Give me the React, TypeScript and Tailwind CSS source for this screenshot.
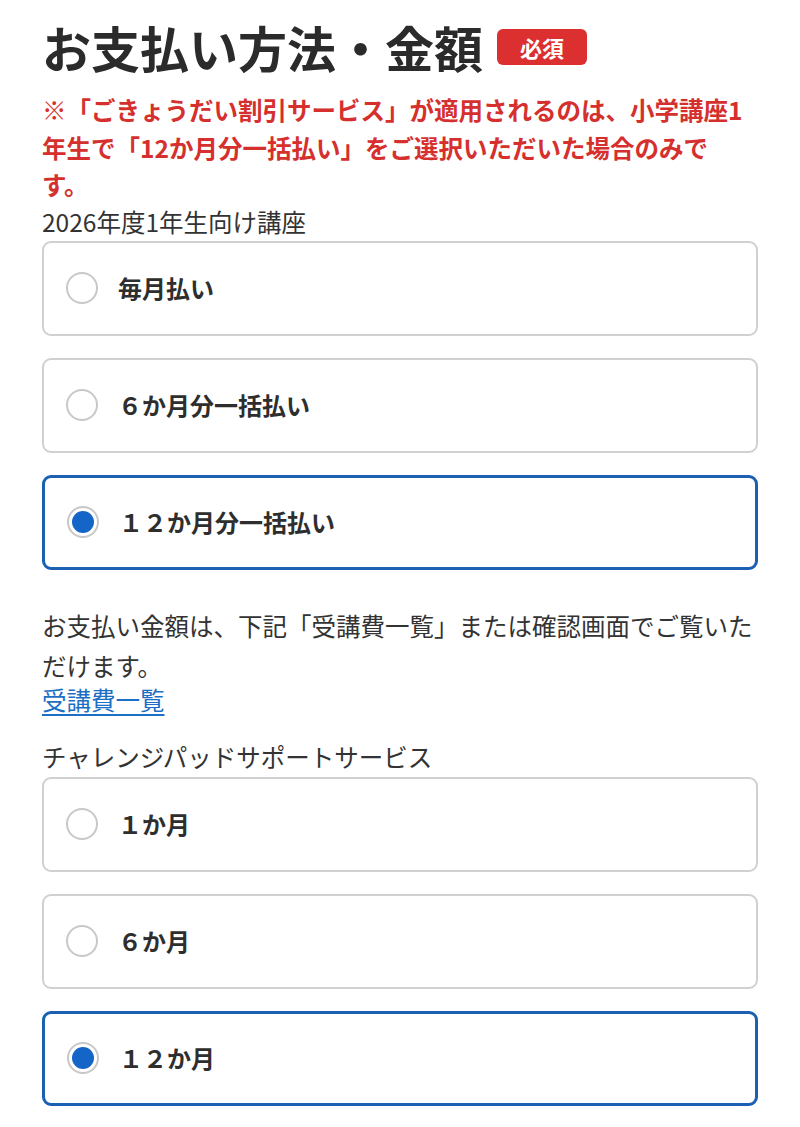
import React from "react";

const font = { fontFamily: '"Noto Sans CJK JP", "Noto Sans", sans-serif' };

function Radio({ checked }: { checked: boolean }) {
  return (
    <span className="flex h-[32px] w-[32px] shrink-0 items-center justify-center rounded-full border-2 border-[#c8c8c8] bg-white">
      {checked && <span className="h-[22px] w-[22px] rounded-full bg-[#1565c8]" />}
    </span>
  );
}

function Option({ label, checked }: { label: string; checked: boolean }) {
  return (
    <div
      className={
        "flex h-[95px] items-center gap-[20px] rounded-[9px] bg-white pl-[22px] " +
        (checked ? "border-[3px] border-[#1c60b3] pl-[21px]" : "border-2 border-[#d0d0d0]")
      }
    >
      <Radio checked={checked} />
      <span className="text-[24px] font-bold leading-none text-[#2e2e2e]">{label}</span>
    </div>
  );
}

export default function App() {
  return (
    <div className="min-h-[1127px] w-[800px] bg-white pl-[42px] pt-[14px]" style={font}>
      <div className="w-[716px]">
        <div className="flex h-[64px] items-center">
          <h1 className="text-[49px] font-bold leading-none text-[#2b2b2b]">お支払い方法・金額</h1>
          <span className="ml-[14px] mt-[2px] flex h-[36px] w-[90px] items-center justify-center rounded-[6px] bg-[#dc2f2f] text-[22px] font-bold leading-none text-white">
            必須
          </span>
        </div>
        <p className="mt-[13px] whitespace-nowrap text-[24.5px] font-bold leading-[37.5px] text-[#d5302d]">
          ※「ごきょうだい割引サービス」が適用されるのは、小学講座1
          <br />
          年生で「12か月分一括払い」をご選択いただいた場合のみで
          <br />
          す。
        </p>
        <p className="text-[24.5px] leading-[36px] text-[#333333]">2026年度1年生向け講座</p>
        <div className="mt-[1px] flex flex-col gap-[22px]">
          <Option label="毎月払い" checked={false} />
          <Option label="６か月分一括払い" checked={false} />
          <Option label="１２か月分一括払い" checked={true} />
        </div>
        <p className="mt-[36px] text-[24.5px] leading-[40px] text-[#333333]">
          お支払い金額は、下記「受講費一覧」または確認画面でご覧いただけます。
        </p>
        <a href="#" className="block w-fit text-[24.5px] leading-[28px] text-[#1d6fc4] underline underline-offset-[4px]">
          受講費一覧
        </a>
        <p className="mt-[25px] text-[24.5px] leading-[36px] text-[#333333]">チャレンジパッドサポートサービス</p>
        <div className="mt-[2px] flex flex-col gap-[22px]">
          <Option label="１か月" checked={false} />
          <Option label="６か月" checked={false} />
          <Option label="１２か月" checked={true} />
        </div>
      </div>
    </div>
  );
}
